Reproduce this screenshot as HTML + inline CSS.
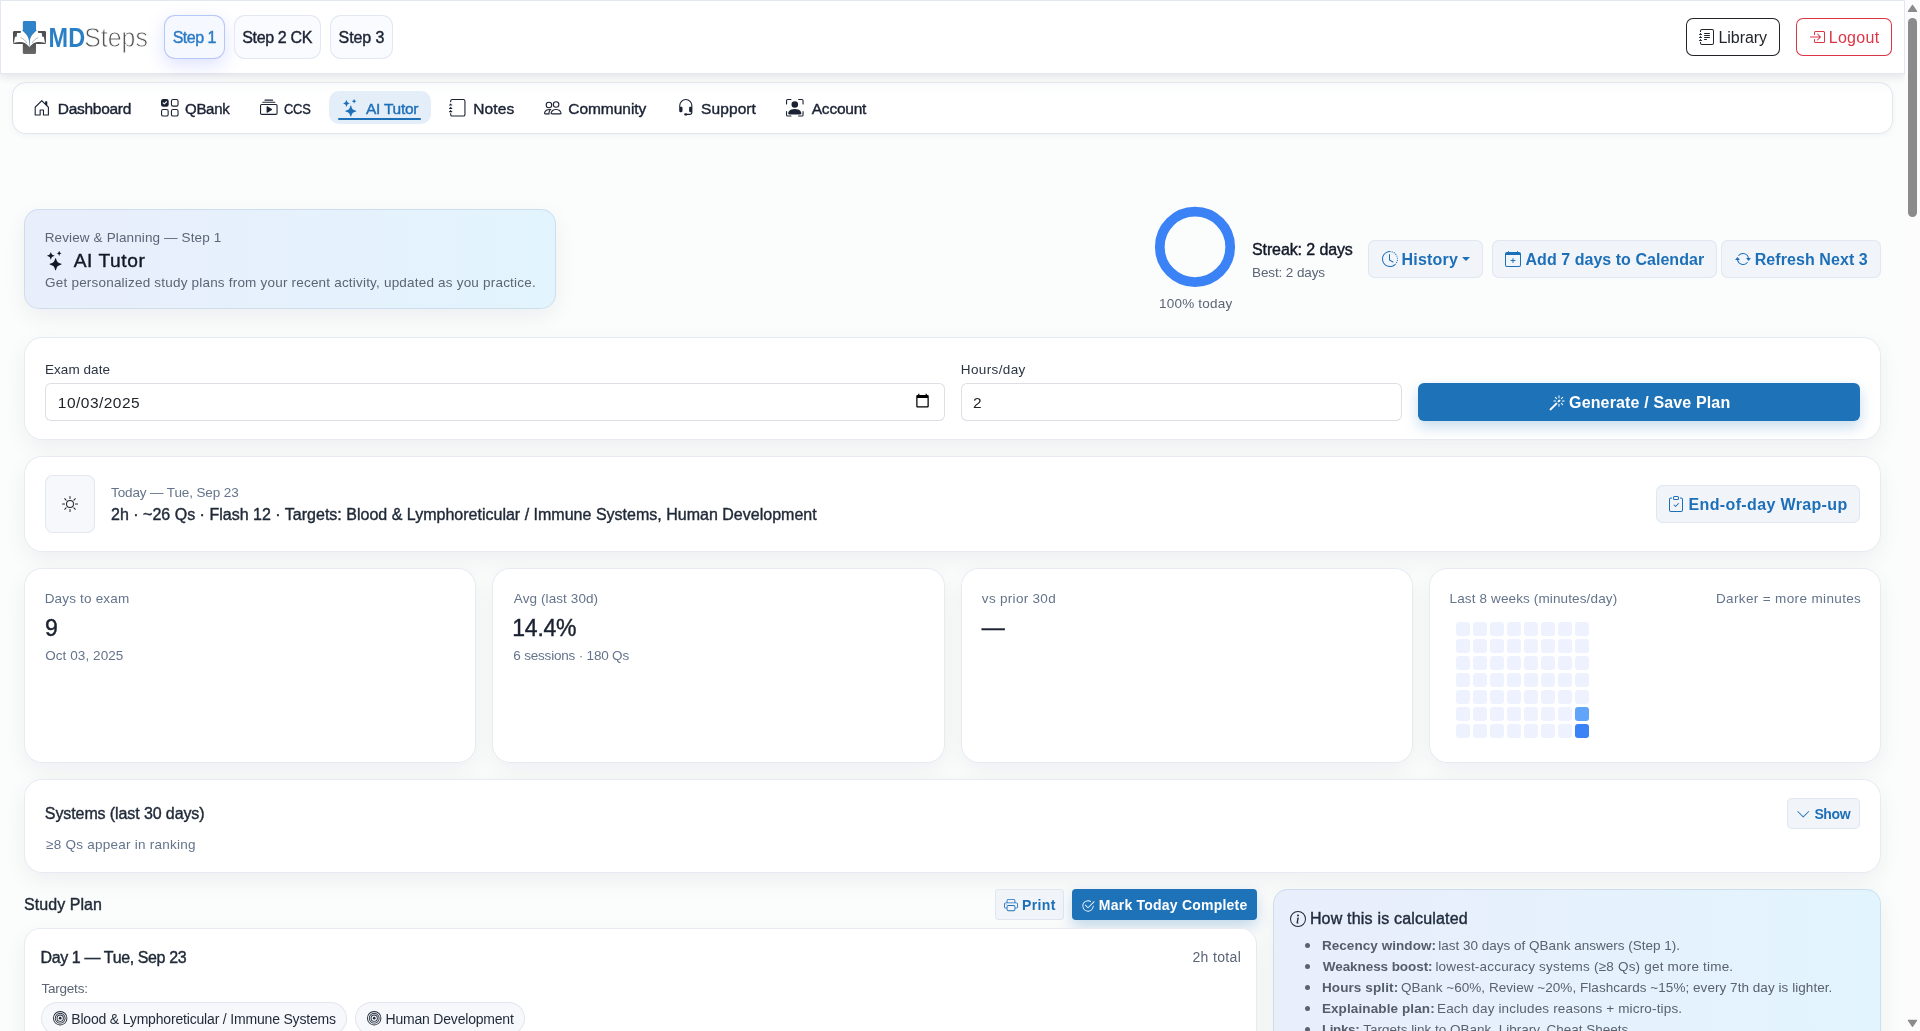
<!DOCTYPE html>
<html lang="en">
<head>
<meta charset="utf-8">
<title>AI Tutor — MDSteps</title>
<style>
*{box-sizing:border-box;margin:0;padding:0}
html,body{width:1920px;height:1031px;overflow:hidden}
body{font-family:"Liberation Sans",sans-serif;font-size:15px;color:#1f2937;background:#fbfcfc;position:relative}
body>*{will-change:transform}
svg{display:block;fill:currentColor;overflow:visible}
.abs,.t,.bx,.card,.btn,.ico{position:absolute}
.t{white-space:nowrap;line-height:1}
.sb{-webkit-text-stroke:.4px currentColor}
.b{font-weight:bold}
.muted{color:#64748b}
#top{position:absolute;left:0;top:0;width:1905px;height:74px;background:#fff;box-shadow:inset 0 0 0 1px #e3e7f1,inset 0 -1px 0 #dde2ec,0 3px 9px rgba(15,23,42,.10)}
.stepbtn{box-shadow:inset 0 0 0 1px #e3e7f3;border-radius:11px;background:#fafbfe;color:#1a2233}
.stepbtn.on{color:#2a7bc6;background:#f5f8ff;box-shadow:inset 0 0 0 1px #b9c6f8,0 6px 18px rgba(99,125,255,.22)}
#subnav{position:absolute;left:12px;top:82px;width:1881px;height:52px;background:linear-gradient(#f9fafb,#fff 12px);border-radius:14px;box-shadow:inset 0 0 0 1px #e1e5ee,0 2px 6px rgba(15,23,42,.04)}
.nv{color:#1a2233;border-radius:10px}
.nv.on{background:#e4eef9;color:#1d6fb8}
.nv.on:after{content:"";position:absolute;left:9px;right:10px;top:26.500px;height:2px;background:#1d6fb8;border-radius:1px}
.card{background:#fff;border-radius:18px;box-shadow:inset 0 0 0 1px #e7eaf2,0 8px 24px rgba(17,24,39,.055)}
.grad{background:linear-gradient(90deg,#e9eefb 0%,#e2f4fd 100%);border-radius:15px;box-shadow:inset 0 0 0 1px rgba(150,180,205,.3),0 8px 24px rgba(17,24,39,.06)}
.lbtn{box-shadow:inset 0 0 0 1px #e0e7f1;border-radius:7px;background:#f1f5fa;color:#1d6fb8}
.pbtn{border-radius:6px;background:#1d72b8;color:#fff;box-shadow:0 6px 14px rgba(29,114,184,.25)}
.inp{box-shadow:inset 0 0 0 1px #dcdfe4;border-radius:6px;background:#fff;color:#212529}
.hm{position:absolute;width:14px;height:14px;border-radius:3px;background:#eef2ff}
.chip{box-shadow:inset 0 0 0 1px #e2e6ee;border-radius:17px;background:#f7f8fb;color:#1f2937}
#how li{list-style:none}
#how li i{position:absolute;width:5px;height:5px;border-radius:50%;background:#5a6270}
</style>
</head>
<body>
<div id="top">
<svg class="abs" style="left:0;top:0" width="160" height="73" viewBox="0 0 160 73">
<defs><linearGradient id="gg" x1="0" y1="0" x2="0" y2="1"><stop offset="0" stop-color="#4e4e4e"/><stop offset="1" stop-color="#6a6a6a"/></linearGradient></defs>
<rect x="13" y="31" width="33" height="13" rx="1.2" fill="#505050"/>
<rect x="22.8" y="42" width="13.2" height="12" rx="1.5" fill="url(#gg)"/>
<path d="M24.2 20.900h10.400a1.400 1.400 0 0 1 1.400 1.400v7.800l.9.500c-3.900 2.300-6.400 5.400-6.900 9.900l-.58 6.900-.58-6.900c-.5-4.500-3-7.600-6.900-9.900l.9-.5v-7.800a1.400 1.400 0 0 1 1.400-1.400z" fill="#2f83c8"/>
<path d="M21.97 30.5C25 32.6 28.3 36 28.9 40.3L29.42 47.6 28.5 46.1C27 44.3 25.5 43 23.4 42.4 20 41.7 16.5 42.1 13.2 43.1L14.05 41.9 15 36.8H16.6L17.1 32.9H20.6L20.8 31.5z" fill="#fff"/>
<path d="M36.87 30.5C33.84 32.6 30.54 36 29.94 40.3L29.42 47.6 30.34 46.1C31.84 44.3 33.34 43 35.44 42.4 38.84 41.7 42.34 42.1 45.64 43.1L44.79 41.9 43.84 36.8H42.24L41.74 32.9H38.24L38.04 31.5z" fill="#fff"/>
<path d="M20.6 37.6c2.700 1.100 4.800 2.900 6.300 5.600M38.240 37.600c-2.700 1.100-4.800 2.900-6.300 5.600" stroke="#777" stroke-width=".55" fill="none"/>
<text x="48.600" y="46.900" font-family="Liberation Sans, sans-serif" font-weight="bold" font-size="27.500" fill="#2b7fc5" textLength="36.500" lengthAdjust="spacingAndGlyphs">MD</text>
<text x="84.300" y="46.900" font-family="Liberation Sans, sans-serif" font-size="27.500" fill="#555" stroke="#fff" stroke-width=".800" textLength="63.500" lengthAdjust="spacingAndGlyphs">Steps</text>
</svg>
<div class="btn stepbtn on" style="left:164px;top:15.2px;width:60.7px;height:43.4px;"><div class="t sb" style="left:8.67px;top:14.8px;font-size:16px;letter-spacing:-0.49px;">Step 1</div></div>
<div class="btn stepbtn" style="left:234px;top:15.2px;width:86.5px;height:43.4px;"><div class="t sb" style="left:8.32px;top:14.8px;font-size:16px;letter-spacing:-0.36px;">Step 2 CK</div></div>
<div class="btn stepbtn" style="left:330px;top:15.2px;width:62.7px;height:43.4px;"><div class="t sb" style="left:8.57px;top:14.8px;font-size:16px;letter-spacing:-0.09px;">Step 3</div></div>
<div class="btn" style="left:1686px;top:18px;width:94px;height:38px;box-shadow:inset 0 0 0 1px #212529;border-radius:7px;color:#212529;background:#fff"><svg class="ico" viewBox="0 0 16 16" width="16" height="16" style="left:12.6px;top:11.2px;"><path d="M5 10.500a.5.5 0 0 1 .5-.5h2a.5.5 0 0 1 0 1h-2a.5.5 0 0 1-.5-.5m0-2a.5.5 0 0 1 .5-.5h5a.5.5 0 0 1 0 1h-5a.5.5 0 0 1-.5-.5m0-2a.5.5 0 0 1 .5-.5h5a.5.5 0 0 1 0 1h-5a.5.5 0 0 1-.5-.5m0-2a.5.5 0 0 1 .5-.5h5a.5.5 0 0 1 0 1h-5a.5.5 0 0 1-.5-.5"/><path d="M3 0h10a2 2 0 0 1 2 2v12a2 2 0 0 1-2 2H3a2 2 0 0 1-2-2v-1h1v1a1 1 0 0 0 1 1h10a1 1 0 0 0 1-1V2a1 1 0 0 0-1-1H3a1 1 0 0 0-1 1v1H1V2a2 2 0 0 1 2-2"/><path d="M1 5v-.5a.5.5 0 0 1 1 0V5h.5a.5.5 0 0 1 0 1h-2a.5.5 0 0 1 0-1zm0 3v-.5a.5.5 0 0 1 1 0V8h.5a.5.5 0 0 1 0 1h-2a.5.5 0 0 1 0-1zm0 3v-.5a.5.5 0 0 1 1 0v.5h.5a.5.5 0 0 1 0 1h-2a.5.5 0 0 1 0-1z"/></svg><div class="t" style="left:32.49px;top:12px;font-size:16px;letter-spacing:-0.06px;">Library</div></div>
<div class="btn" style="left:1796px;top:18px;width:96px;height:38px;box-shadow:inset 0 0 0 1px #dc3545;border-radius:7px;color:#dc3545;background:#fff"><svg class="ico" viewBox="0 0 16 16" width="16" height="16" style="left:12.9px;top:11.2px;"><path fill-rule="evenodd" d="M6 3.500a.5.5 0 0 1 .5-.5h8a.5.5 0 0 1 .5.5v9a.5.5 0 0 1-.5.5h-8a.5.5 0 0 1-.5-.5v-2a.5.5 0 0 0-1 0v2A1.500 1.500 0 0 0 6.500 14h8a1.500 1.500 0 0 0 1.500-1.500v-9A1.500 1.500 0 0 0 14.500 2h-8A1.500 1.500 0 0 0 5 3.500v2a.5.5 0 0 0 1 0z"/><path fill-rule="evenodd" d="M11.854 8.354a.5.5 0 0 0 0-.708l-3-3a.5.5 0 1 0-.708.708L10.293 7.500H1.500a.5.5 0 0 0 0 1h8.793l-2.147 2.146a.5.5 0 0 0 .708.708z"/></svg><div class="t" style="left:32.69px;top:12px;font-size:16px;letter-spacing:0.3px;">Logout</div></div>
</div>
<div id="subnav">
<div class="btn nv" style="left:9px;top:9.2px;width:121px;height:33.3px;"><svg class="ico" viewBox="0 0 16 16" width="17.6" height="17.6" style="left:11.8px;top:7.9px;"><path d="M8.354 1.146a.5.5 0 0 0-.708 0l-6 6A.5.5 0 0 0 1.5 7.5v7a.5.5 0 0 0 .5.5h4.5a.5.5 0 0 0 .5-.5v-4h2v4a.5.5 0 0 0 .5.5H14a.5.5 0 0 0 .5-.5v-7a.5.5 0 0 0-.146-.354L13 5.793V2.5a.5.5 0 0 0-.5-.5h-1a.5.5 0 0 0-.5.5v1.293zM2.5 14V7.707l5.5-5.5 5.5 5.5V14H10v-4a.5.5 0 0 0-.5-.5h-3a.5.5 0 0 0-.5.5v4z"/></svg><div class="t sb" style="left:36.83px;top:9.8px;font-size:15.5px;letter-spacing:-0.29px;">Dashboard</div></div>
<div class="btn nv" style="left:136.5px;top:9.2px;width:93px;height:33.3px;"><svg class="ico" viewBox="0 0 16 16" width="17.6" height="17.6" style="left:12.4px;top:7.9px;"><path d="M2 10h3a1 1 0 0 1 1 1v3a1 1 0 0 1-1 1H2a1 1 0 0 1-1-1v-3a1 1 0 0 1 1-1m9-9h3a1 1 0 0 1 1 1v3a1 1 0 0 1-1 1h-3a1 1 0 0 1-1-1V2a1 1 0 0 1 1-1m0 9a1 1 0 0 0-1 1v3a1 1 0 0 0 1 1h3a1 1 0 0 0 1-1v-3a1 1 0 0 0-1-1zm0-10a2 2 0 0 0-2 2v3a2 2 0 0 0 2 2h3a2 2 0 0 0 2-2V2a2 2 0 0 0-2-2zM2 9a2 2 0 0 0-2 2v3a2 2 0 0 0 2 2h3a2 2 0 0 0 2-2v-3a2 2 0 0 0-2-2zm7 2a2 2 0 0 1 2-2h3a2 2 0 0 1 2 2v3a2 2 0 0 1-2 2h-3a2 2 0 0 1-2-2zM0 2a2 2 0 0 1 2-2h3a2 2 0 0 1 2 2v3a2 2 0 0 1-2 2H2a2 2 0 0 1-2-2zm5.354.854a.5.5 0 1 0-.708-.708L3 3.793l-.646-.647a.5.5 0 1 0-.708.708l1 1a.5.5 0 0 0 .708 0z"/></svg><div class="t sb" style="left:36.59px;top:9.8px;font-size:15.5px;letter-spacing:-0.3px;transform:scaleX(0.968);transform-origin:0 0;">QBank</div></div>
<div class="btn nv" style="left:235.5px;top:9.2px;width:74.5px;height:33.3px;"><svg class="ico" viewBox="0 0 16 16" width="17.6" height="17.6" style="left:12.1px;top:7.9px;"><path d="M2 3a.5.5 0 0 0 .5.5h11a.5.5 0 0 0 0-1h-11A.5.5 0 0 0 2 3m2-2a.5.5 0 0 0 .5.5h7a.5.5 0 0 0 0-1h-7A.5.5 0 0 0 4 1m2.765 5.576A.5.5 0 0 0 6 7v5a.5.5 0 0 0 .765.424l4-2.5a.5.5 0 0 0 0-.848z"/><path d="M1.5 14.5A1.5 1.5 0 0 1 0 13V6a1.5 1.5 0 0 1 1.5-1.5h13A1.5 1.5 0 0 1 16 6v7a1.5 1.5 0 0 1-1.5 1.5zm13-1a.5.5 0 0 0 .5-.5V6a.5.5 0 0 0-.5-.5h-13A.5.5 0 0 0 1 6v7a.5.5 0 0 0 .5.5z"/></svg><div class="t sb" style="left:36.64px;top:9.8px;font-size:15.5px;letter-spacing:-0.3px;transform:scaleX(0.833);transform-origin:0 0;">CCS</div></div>
<div class="btn nv on" style="left:317px;top:9.2px;width:102px;height:33.3px;"><svg class="ico" viewBox="0 0 16 16" width="17.6" height="17.6" style="left:12.7px;top:7.9px;"><path d="M7.657 6.247c.11-.33.576-.33.686 0l.645 1.937a2.89 2.89 0 0 0 1.829 1.828l1.936.645c.33.11.33.576 0 .686l-1.937.645a2.89 2.89 0 0 0-1.828 1.829l-.645 1.936a.361.361 0 0 1-.686 0l-.645-1.937a2.89 2.89 0 0 0-1.828-1.828l-1.937-.645a.361.361 0 0 1 0-.686l1.937-.645a2.89 2.89 0 0 0 1.828-1.828zM3.794 1.148a.217.217 0 0 1 .412 0l.387 1.162c.173.518.579.924 1.097 1.097l1.162.387a.217.217 0 0 1 0 .412l-1.162.387A1.73 1.73 0 0 0 4.593 5.69l-.387 1.162a.217.217 0 0 1-.412 0L3.407 5.69A1.73 1.73 0 0 0 2.31 4.593l-1.162-.387a.217.217 0 0 1 0-.412l1.162-.387A1.73 1.73 0 0 0 3.407 2.31zM10.863.099a.145.145 0 0 1 .274 0l.258.774c.115.346.386.617.732.732l.774.258a.145.145 0 0 1 0 .274l-.774.258a1.16 1.16 0 0 0-.732.732l-.258.774a.145.145 0 0 1-.274 0l-.258-.774a1.16 1.16 0 0 0-.732-.732L9.100 2.137a.145.145 0 0 1 0-.274l.774-.258c.346-.115.617-.386.732-.732z"/></svg><div class="t sb" style="left:37.02px;top:9.8px;font-size:15.5px;letter-spacing:-0.26px;">AI Tutor</div></div>
<div class="btn nv" style="left:425.5px;top:9.2px;width:88px;height:33.3px;"><svg class="ico" viewBox="0 0 16 16" width="17.6" height="17.6" style="left:11.4px;top:7.9px;"><path d="M3 0h10a2 2 0 0 1 2 2v12a2 2 0 0 1-2 2H3a2 2 0 0 1-2-2v-1h1v1a1 1 0 0 0 1 1h10a1 1 0 0 0 1-1V2a1 1 0 0 0-1-1H3a1 1 0 0 0-1 1v1H1V2a2 2 0 0 1 2-2"/><path d="M1 5v-.5a.5.5 0 0 1 1 0V5h.5a.5.5 0 0 1 0 1h-2a.5.5 0 0 1 0-1zm0 3v-.5a.5.5 0 0 1 1 0V8h.5a.5.5 0 0 1 0 1h-2a.5.5 0 0 1 0-1zm0 3v-.5a.5.5 0 0 1 1 0v.5h.5a.5.5 0 0 1 0 1h-2a.5.5 0 0 1 0-1z"/></svg><div class="t sb" style="left:35.73px;top:9.8px;font-size:15.5px;letter-spacing:0.11px;">Notes</div></div>
<div class="btn nv" style="left:520px;top:9.2px;width:126px;height:33.3px;"><svg class="ico" viewBox="0 0 16 16" width="17.6" height="17.6" style="left:11.9px;top:7.9px;"><path d="M15 14s1 0 1-1-1-4-5-4-5 3-5 4 1 1 1 1zm-7.978-1L7 12.996c.001-.264.167-1.030.760-1.720C8.312 10.629 9.282 10 11 10c1.717 0 2.687.630 3.240 1.276.593.690.758 1.457.760 1.720l-.008.002-.014.002zM11 7a2 2 0 1 0 0-4 2 2 0 0 0 0 4m3-2a3 3 0 1 1-6 0 3 3 0 0 1 6 0M6.936 9.280a6 6 0 0 0-1.230-.247A7 7 0 0 0 5 9c-4 0-5 3-5 4q0 1 1 1h4.216A2.240 2.240 0 0 1 5 13c0-1.010.377-2.042 1.090-2.904.243-.294.526-.569.846-.816M4.920 10A5.500 5.500 0 0 0 4 13H1c0-.260.164-1.030.760-1.724.545-.636 1.492-1.256 3.160-1.275ZM1.500 5.500a3 3 0 1 1 6 0 3 3 0 0 1-6 0m3-2a2 2 0 1 0 0 4 2 2 0 0 0 0-4"/></svg><div class="t sb" style="left:36.26px;top:9.8px;font-size:15.5px;letter-spacing:-0.04px;">Community</div></div>
<div class="btn nv" style="left:653px;top:9.2px;width:102.5px;height:33.3px;"><svg class="ico" viewBox="0 0 16 16" width="17.6" height="17.6" style="left:11.6px;top:7.9px;"><path d="M8 1a5 5 0 0 0-5 5v1h1a1 1 0 0 1 1 1v3a1 1 0 0 1-1 1H3a1 1 0 0 1-1-1V6a6 6 0 1 1 12 0v6a2.500 2.500 0 0 1-2.500 2.500H9.366a1 1 0 0 1-.866.500h-1a1 1 0 1 1 0-2h1a1 1 0 0 1 .866.500H11.500A1.500 1.500 0 0 0 13 12h-1a1 1 0 0 1-1-1V8a1 1 0 0 1 1-1h1V6a5 5 0 0 0-5-5"/></svg><div class="t sb" style="left:36.1px;top:9.8px;font-size:15.5px;letter-spacing:0.09px;">Support</div></div>
<div class="btn nv" style="left:761.5px;top:9.2px;width:104.5px;height:33.3px;"><svg class="ico" viewBox="0 0 16 16" width="17.6" height="17.6" style="left:12.2px;top:7.9px;"><path d="M1.500 1a.5.5 0 0 0-.5.5v3a.5.5 0 0 1-1 0v-3A1.500 1.500 0 0 1 1.500 0h3a.5.5 0 0 1 0 1zM11 .5a.5.5 0 0 1 .5-.5h3A1.500 1.500 0 0 1 16 1.500v3a.5.5 0 0 1-1 0v-3a.5.5 0 0 0-.5-.5h-3a.5.5 0 0 1-.5-.5M.5 11a.5.5 0 0 1 .5.5v3a.5.5 0 0 0 .5.5h3a.5.5 0 0 1 0 1h-3A1.500 1.500 0 0 1 0 14.500v-3a.5.5 0 0 1 .5-.5m15 0a.5.5 0 0 1 .5.5v3a1.500 1.500 0 0 1-1.500 1.500h-3a.5.5 0 0 1 0-1h3a.5.5 0 0 0 .5-.5v-3a.5.5 0 0 1 .5-.5"/><path d="M3 14s-1 0-1-1 1-4 6-4 6 3 6 4-1 1-1 1zm8-9a3 3 0 1 1-6 0 3 3 0 0 1 6 0"/></svg><div class="t sb" style="left:38.27px;top:9.8px;font-size:15.5px;letter-spacing:-0.23px;">Account</div></div>
</div>
<div class="card grad" style="left:24px;top:209px;width:532px;height:100px;"><div class="t" style="left:20.69px;top:22px;font-size:13.5px;letter-spacing:0.13px;color:#5b6576">Review &amp; Planning — Step 1</div><svg class="ico" viewBox="0 0 16 16" width="19.2" height="19.2" style="left:21.5px;top:42.1px;color:#111827"><path d="M7.657 6.247c.11-.33.576-.33.686 0l.645 1.937a2.89 2.89 0 0 0 1.829 1.828l1.936.645c.33.11.33.576 0 .686l-1.937.645a2.89 2.89 0 0 0-1.828 1.829l-.645 1.936a.361.361 0 0 1-.686 0l-.645-1.937a2.89 2.89 0 0 0-1.828-1.828l-1.937-.645a.361.361 0 0 1 0-.686l1.937-.645a2.89 2.89 0 0 0 1.828-1.828zM3.794 1.148a.217.217 0 0 1 .412 0l.387 1.162c.173.518.579.924 1.097 1.097l1.162.387a.217.217 0 0 1 0 .412l-1.162.387A1.73 1.73 0 0 0 4.593 5.69l-.387 1.162a.217.217 0 0 1-.412 0L3.407 5.69A1.73 1.73 0 0 0 2.31 4.593l-1.162-.387a.217.217 0 0 1 0-.412l1.162-.387A1.73 1.73 0 0 0 3.407 2.31zM10.863.099a.145.145 0 0 1 .274 0l.258.774c.115.346.386.617.732.732l.774.258a.145.145 0 0 1 0 .274l-.774.258a1.16 1.16 0 0 0-.732.732l-.258.774a.145.145 0 0 1-.274 0l-.258-.774a1.16 1.16 0 0 0-.732-.732L9.100 2.137a.145.145 0 0 1 0-.274l.774-.258c.346-.115.617-.386.732-.732z"/></svg><div class="t sb" style="left:49.66px;top:42px;font-size:19.2px;letter-spacing:0.57px;color:#111827">AI Tutor</div><div class="t" style="left:21.12px;top:67px;font-size:13.5px;letter-spacing:0.2px;color:#5b6576">Get personalized study plans from your recent activity, updated as you practice.</div></div>
<svg class="abs" style="left:1151px;top:203px" width="88" height="88" viewBox="0 0 88 88"><circle cx="44" cy="43.900" r="35.200" fill="none" stroke="#3b82f6" stroke-width="9.700"/></svg>
<div class="t" style="left:1158.87px;top:297px;font-size:13.5px;letter-spacing:0.21px;color:#5b6576">100% today</div><div class="t sb" style="left:1252.07px;top:242px;font-size:16px;letter-spacing:-0.11px;color:#111827">Streak: 2 days</div><div class="t" style="left:1251.69px;top:266px;font-size:13.5px;letter-spacing:-0.11px;color:#5b6576">Best: 2 days</div><div class="btn lbtn" style="left:1368px;top:240px;width:115px;height:38px;"><svg class="ico" viewBox="0 0 16 16" width="16" height="16" style="left:13.8px;top:11.3px;"><path d="M8.515 1.019A7 7 0 0 0 8 1V0a8 8 0 0 1 .589.022zm2.004.450a7 7 0 0 0-.985-.299l.219-.976q.576.129 1.126.342zm1.370.710a7 7 0 0 0-.439-.270l.493-.870a8 8 0 0 1 .979.654l-.615.789a7 7 0 0 0-.418-.302zm1.834 1.790a7 7 0 0 0-.653-.796l.724-.690q.406.429.747.910zm.744 1.352a7 7 0 0 0-.214-.468l.893-.450a8 8 0 0 1 .450 1.088l-.950.313a7 7 0 0 0-.179-.483m.530 2.507a7 7 0 0 0-.100-1.025l.985-.170q.100.580.116 1.170zm-.131 1.538q.050-.254.081-.510l.993.123a8 8 0 0 1-.230 1.155l-.964-.267q.069-.247.120-.501m-.952 2.379q.276-.436.486-.908l.914.405q-.240.540-.555 1.038zm-.964 1.205q.183-.183.350-.378l.758.653a8 8 0 0 1-.401.432z"/><path d="M8 1a7 7 0 1 0 4.950 11.950l.707.707A8.001 8.001 0 1 1 8 0z"/><path d="M7.500 3a.5.5 0 0 1 .5.5v5.210l3.248 1.856a.5.5 0 0 1-.496.868l-3.500-2A.5.5 0 0 1 7 9V3.500a.5.5 0 0 1 .5-.5"/></svg><div class="t b" style="left:33.43px;top:12px;font-size:16px;letter-spacing:0.24px;">History</div><i class="abs" style="left:94.3px;top:17.4px;border:4.100px solid transparent;border-top:4.500px solid #1d6fb8;border-bottom:0"></i></div>
<div class="btn lbtn" style="left:1492px;top:240px;width:225px;height:38px;"><svg class="ico" viewBox="0 0 16 16" width="16" height="16" style="left:13.1px;top:11.3px;"><path d="M8 7a.5.5 0 0 1 .5.5V9H10a.5.5 0 0 1 0 1H8.500v1.500a.5.5 0 0 1-1 0V10H6a.5.5 0 0 1 0-1h1.500V7.500A.5.5 0 0 1 8 7"/><path d="M3.500 0a.5.5 0 0 1 .5.5V1h8V.5a.5.5 0 0 1 1 0V1h1a2 2 0 0 1 2 2v11a2 2 0 0 1-2 2H2a2 2 0 0 1-2-2V3a2 2 0 0 1 2-2h1V.5a.5.5 0 0 1 .5-.5M1 4v10a1 1 0 0 0 1 1h12a1 1 0 0 0 1-1V4z"/></svg><div class="t b" style="left:33.5px;top:12px;font-size:16px;letter-spacing:0.04px;">Add 7 days to Calendar</div></div>
<div class="btn lbtn" style="left:1721px;top:240px;width:160px;height:38px;"><svg class="ico" viewBox="0 0 16 16" width="16" height="16" style="left:13.9px;top:11.3px;"><path d="M11.534 7h3.932a.25.25 0 0 1 .192.410l-1.966 2.360a.25.25 0 0 1-.384 0l-1.966-2.360a.25.25 0 0 1 .192-.410m-11 2h3.932a.25.25 0 0 0 .192-.410L2.692 6.230a.25.25 0 0 0-.384 0L.342 8.590A.25.25 0 0 0 .534 9"/><path fill-rule="evenodd" d="M8 3c-1.552 0-2.940.707-3.857 1.818a.5.5 0 1 1-.771-.636A6.002 6.002 0 0 1 13.917 7H12.900A5 5 0 0 0 8 3M3.100 9a5.002 5.002 0 0 0 8.757 2.182.5.5 0 1 1 .771.636A6.002 6.002 0 0 1 2.083 9z"/></svg><div class="t b" style="left:33.63px;top:12px;font-size:16px;letter-spacing:0.08px;">Refresh Next 3</div></div>
<div class="card" style="left:24px;top:337px;width:1857px;height:103px;"><div class="t" style="left:20.94px;top:26px;font-size:13.5px;letter-spacing:0.07px;color:#2b3443">Exam date</div><div class="btn inp" style="left:21px;top:46px;width:900px;height:38px;"><div class="t" style="left:12.87px;top:12px;font-size:15.5px;letter-spacing:0.47px;">10/03/2025</div><svg class="abs" style="left:870px;top:10.300px;color:#000" width="15" height="15" viewBox="0 0 24 24"><path d="M20 3h-1V1h-2v2H7V1H5v2H4c-1.100 0-2 .900-2 2v16c0 1.100.900 2 2 2h16c1.100 0 2-.900 2-2V5c0-1.100-.900-2-2-2zm0 18H4V8h16v13z"/></svg></div>
<div class="t" style="left:936.79px;top:26px;font-size:13.5px;letter-spacing:0.38px;color:#2b3443">Hours/day</div><div class="btn inp" style="left:937px;top:46px;width:441px;height:38px;"><div class="t" style="left:12.12px;top:12px;font-size:15.5px;letter-spacing:0.84px;">2</div></div>
<div class="btn pbtn" style="left:1394px;top:46px;width:442px;height:38px;"><svg class="ico" viewBox="0 0 16 16" width="16" height="16" style="left:130.8px;top:11.5px;"><path d="M9.500 2.672a.5.5 0 1 0 1 0V.843a.5.5 0 0 0-1 0zm4.500.035A.5.5 0 0 0 13.293 2L12 3.293a.5.5 0 1 0 .707.707zM7.293 4A.5.5 0 1 0 8 3.293L6.707 2A.5.5 0 0 0 6 2.707zm-.621 2.500a.5.5 0 1 0 0-1H4.843a.5.5 0 1 0 0 1zm8.485 0a.5.5 0 1 0 0-1h-1.829a.5.5 0 0 0 0 1zM13.293 10A.5.5 0 1 0 14 9.293L12.707 8a.5.5 0 1 0-.707.707zM9.500 11.157a.5.5 0 0 0 1 0V9.328a.5.5 0 0 0-1 0zm1.854-5.097a.5.5 0 0 0 0-.706l-.708-.708a.5.5 0 0 0-.707 0L8.646 5.940a.5.5 0 0 0 0 .707l.708.708a.5.5 0 0 0 .707 0l1.293-1.293Zm-3 3a.5.5 0 0 0 0-.706l-.708-.708a.5.5 0 0 0-.707 0L.646 13.940a.5.5 0 0 0 0 .707l.708.708a.5.5 0 0 0 .707 0z"/></svg><div class="t b" style="left:151.04px;top:12px;font-size:16px;letter-spacing:0.15px;">Generate / Save Plan</div></div>
</div>
<div class="card" style="left:24px;top:456px;width:1857px;height:96px;"><div class="btn" style="left:21px;top:19px;width:50px;height:58px;box-shadow:inset 0 0 0 1px #e3e8f0;border-radius:8px;background:#f6f8fb;color:#222"><svg class="ico" viewBox="0 0 16 16" width="16" height="16" style="left:17.3px;top:21.3px;"><path d="M8 11a3 3 0 1 1 0-6 3 3 0 0 1 0 6m0 1a4 4 0 1 0 0-8 4 4 0 0 0 0 8M8 0a.5.5 0 0 1 .5.5v2a.5.5 0 0 1-1 0v-2A.5.5 0 0 1 8 0m0 13a.5.5 0 0 1 .5.5v2a.5.5 0 0 1-1 0v-2A.5.5 0 0 1 8 13m8-5a.5.5 0 0 1-.5.5h-2a.5.5 0 0 1 0-1h2a.5.5 0 0 1 .5.5M3 8a.5.5 0 0 1-.5.5h-2a.5.5 0 0 1 0-1h2A.5.5 0 0 1 3 8m10.657-5.657a.5.5 0 0 1 0 .707l-1.414 1.415a.5.5 0 1 1-.707-.708l1.414-1.414a.5.5 0 0 1 .707 0m-9.193 9.193a.5.5 0 0 1 0 .707L3.050 13.657a.5.5 0 0 1-.707-.707l1.414-1.414a.5.5 0 0 1 .707 0m9.193 2.121a.5.5 0 0 1-.707 0l-1.414-1.414a.5.5 0 0 1 .707-.707l1.414 1.414a.5.5 0 0 1 0 .707M4.464 4.465a.5.5 0 0 1-.707 0L2.343 3.050a.5.5 0 1 1 .707-.707l1.414 1.414a.5.5 0 0 1 0 .708"/></svg></div>
<div class="t" style="left:87px;top:30px;font-size:13.5px;letter-spacing:-0.12px;color:#64748b">Today — Tue, Sep 23</div><div class="t sb" style="left:87px;top:51px;font-size:16px;letter-spacing:0.01px;color:#1f2937">2h · ~26 Qs · Flash 12 · Targets: Blood &amp; Lymphoreticular / Immune Systems, Human Development</div><div class="btn lbtn" style="left:1632px;top:29px;width:204px;height:38px;"><svg class="ico" viewBox="0 0 16 16" width="16" height="16" style="left:11.9px;top:11.3px;"><path fill-rule="evenodd" d="M10.854 7.146a.5.5 0 0 1 0 .708l-3 3a.5.5 0 0 1-.708 0l-1.500-1.500a.5.5 0 1 1 .708-.708L7.500 9.793l2.646-2.647a.5.5 0 0 1 .708 0"/><path d="M4 1.500H3a2 2 0 0 0-2 2V14a2 2 0 0 0 2 2h10a2 2 0 0 0 2-2V3.500a2 2 0 0 0-2-2h-1v1h1a1 1 0 0 1 1 1V14a1 1 0 0 1-1 1H3a1 1 0 0 1-1-1V3.500a1 1 0 0 1 1-1h1z"/><path d="M9.500 1a.5.5 0 0 1 .5.5v1a.5.5 0 0 1-.5.5h-3a.5.5 0 0 1-.5-.5v-1a.5.5 0 0 1 .5-.5zm-3-1A1.500 1.500 0 0 0 5 1.500v1A1.500 1.500 0 0 0 6.500 4h3A1.500 1.500 0 0 0 11 2.500v-1A1.500 1.500 0 0 0 9.500 0z"/></svg><div class="t b" style="left:32.53px;top:12px;font-size:16px;letter-spacing:0.36px;">End-of-day Wrap-up</div></div>
</div>
<div class="card" style="left:24px;top:568px;width:452px;height:195px;"><div class="t muted" style="left:20.69px;top:24px;font-size:13.5px;letter-spacing:0.18px;">Days to exam</div><div class="t sb" style="left:21.02px;top:49px;font-size:23px;letter-spacing:1.58px;color:#1a2130">9</div><div class="t muted" style="left:21.16px;top:81px;font-size:13.5px;letter-spacing:0.08px;">Oct 03, 2025</div></div>
<div class="card" style="left:492px;top:568px;width:453px;height:195px;"><div class="t muted" style="left:21.77px;top:24px;font-size:13.5px;letter-spacing:0.1px;">Avg (last 30d)</div><div class="t sb" style="left:20.3px;top:49px;font-size:23px;letter-spacing:-0.25px;color:#1a2130">14.4%</div><div class="t muted" style="left:21.31px;top:81px;font-size:13.5px;letter-spacing:-0.19px;">6 sessions · 180 Qs</div></div>
<div class="card" style="left:961px;top:568px;width:452px;height:195px;"><div class="t muted" style="left:20.85px;top:24px;font-size:13.5px;letter-spacing:0.3px;">vs prior 30d</div><div class="t sb" style="left:20.8px;top:48px;font-size:23px;letter-spacing:1px;color:#1a2130">—</div></div>
<div class="card" style="left:1429px;top:568px;width:452px;height:195px;"><div class="t muted" style="left:20.59px;top:24px;font-size:13.5px;letter-spacing:0.13px;">Last 8 weeks (minutes/day)</div><div class="t muted" style="left:286.99px;top:24px;font-size:13.5px;letter-spacing:0.36px;">Darker = more minutes</div><i class="hm" style="left:27px;top:54px;"></i><i class="hm" style="left:44px;top:54px;"></i><i class="hm" style="left:61px;top:54px;"></i><i class="hm" style="left:78px;top:54px;"></i><i class="hm" style="left:95px;top:54px;"></i><i class="hm" style="left:112px;top:54px;"></i><i class="hm" style="left:129px;top:54px;"></i><i class="hm" style="left:146px;top:54px;"></i><i class="hm" style="left:27px;top:71px;"></i><i class="hm" style="left:44px;top:71px;"></i><i class="hm" style="left:61px;top:71px;"></i><i class="hm" style="left:78px;top:71px;"></i><i class="hm" style="left:95px;top:71px;"></i><i class="hm" style="left:112px;top:71px;"></i><i class="hm" style="left:129px;top:71px;"></i><i class="hm" style="left:146px;top:71px;"></i><i class="hm" style="left:27px;top:88px;"></i><i class="hm" style="left:44px;top:88px;"></i><i class="hm" style="left:61px;top:88px;"></i><i class="hm" style="left:78px;top:88px;"></i><i class="hm" style="left:95px;top:88px;"></i><i class="hm" style="left:112px;top:88px;"></i><i class="hm" style="left:129px;top:88px;"></i><i class="hm" style="left:146px;top:88px;"></i><i class="hm" style="left:27px;top:105px;"></i><i class="hm" style="left:44px;top:105px;"></i><i class="hm" style="left:61px;top:105px;"></i><i class="hm" style="left:78px;top:105px;"></i><i class="hm" style="left:95px;top:105px;"></i><i class="hm" style="left:112px;top:105px;"></i><i class="hm" style="left:129px;top:105px;"></i><i class="hm" style="left:146px;top:105px;"></i><i class="hm" style="left:27px;top:122px;"></i><i class="hm" style="left:44px;top:122px;"></i><i class="hm" style="left:61px;top:122px;"></i><i class="hm" style="left:78px;top:122px;"></i><i class="hm" style="left:95px;top:122px;"></i><i class="hm" style="left:112px;top:122px;"></i><i class="hm" style="left:129px;top:122px;"></i><i class="hm" style="left:146px;top:122px;"></i><i class="hm" style="left:27px;top:139px;"></i><i class="hm" style="left:44px;top:139px;"></i><i class="hm" style="left:61px;top:139px;"></i><i class="hm" style="left:78px;top:139px;"></i><i class="hm" style="left:95px;top:139px;"></i><i class="hm" style="left:112px;top:139px;"></i><i class="hm" style="left:129px;top:139px;"></i><i class="hm" style="left:146px;top:139px;background:#60a5fa;"></i><i class="hm" style="left:27px;top:156px;"></i><i class="hm" style="left:44px;top:156px;"></i><i class="hm" style="left:61px;top:156px;"></i><i class="hm" style="left:78px;top:156px;"></i><i class="hm" style="left:95px;top:156px;"></i><i class="hm" style="left:112px;top:156px;"></i><i class="hm" style="left:129px;top:156px;"></i><i class="hm" style="left:146px;top:156px;background:#3b82f6;"></i></div>
<div class="card" style="left:24px;top:779px;width:1857px;height:94px;"><div class="t sb" style="left:20.87px;top:27px;font-size:16px;letter-spacing:-0.1px;color:#1f2937">Systems (last 30 days)</div><div class="t muted" style="left:22.07px;top:59px;font-size:13.5px;letter-spacing:0.25px;">≥8 Qs appear in ranking</div><div class="btn lbtn" style="left:1763px;top:19px;width:73px;height:31px;border-radius:5px"><svg class="ico" viewBox="0 0 16 16" width="14.5" height="14.5" style="left:9.1px;top:8.7px;"><path fill-rule="evenodd" d="M1.646 4.646a.5.5 0 0 1 .708 0L8 10.293l5.646-5.647a.5.5 0 0 1 .708.708l-6 6a.5.5 0 0 1-.708 0l-6-6a.5.5 0 0 1 0-.708"/></svg><div class="t b" style="left:27.4px;top:9px;font-size:14px;letter-spacing:-0.39px;">Show</div></div>
</div>
<div class="t sb" style="left:23.97px;top:897px;font-size:16px;letter-spacing:0.06px;color:#1f2937">Study Plan</div><div class="btn lbtn" style="left:995px;top:889px;width:69px;height:31px;border-radius:4px"><svg class="ico" viewBox="0 0 16 16" width="14" height="14" style="left:9px;top:9.3px;"><path d="M2.500 8a.5.5 0 1 0 0-1 .5.5 0 0 0 0 1"/><path d="M5 1a2 2 0 0 0-2 2v2H2a2 2 0 0 0-2 2v3a2 2 0 0 0 2 2h1v1a2 2 0 0 0 2 2h6a2 2 0 0 0 2-2v-1h1a2 2 0 0 0 2-2V7a2 2 0 0 0-2-2h-1V3a2 2 0 0 0-2-2zM4 3a1 1 0 0 1 1-1h6a1 1 0 0 1 1 1v2H4zm1 5a2 2 0 0 0-2 2v1H2a1 1 0 0 1-1-1V7a1 1 0 0 1 1-1h12a1 1 0 0 1 1 1v3a1 1 0 0 1-1 1h-1v-1a2 2 0 0 0-2-2zm7 2v3a1 1 0 0 1-1 1H5a1 1 0 0 1-1-1v-3a1 1 0 0 1 1-1h6a1 1 0 0 1 1 1"/></svg><div class="t b" style="left:26.96px;top:9px;font-size:14px;letter-spacing:0.4px;">Print</div></div>
<div class="btn pbtn" style="left:1072px;top:889px;width:185px;height:31px;border-radius:4px"><svg class="ico" viewBox="0 0 16 16" width="14" height="14" style="left:9px;top:9.7px;"><path d="M2.500 8a5.500 5.500 0 0 1 8.250-4.764.5.5 0 0 0 .5-.866A6.500 6.500 0 1 0 14.500 8a.5.5 0 0 0-1 0 5.500 5.500 0 1 1-11 0"/><path d="M15.354 3.354a.5.5 0 0 0-.708-.708L8 9.293 5.354 6.646a.5.5 0 1 0-.708.708l3 3a.5.5 0 0 0 .708 0z"/></svg><div class="t b" style="left:26.86px;top:9px;font-size:14px;letter-spacing:0.22px;">Mark Today Complete</div></div>
<div class="card" style="left:24px;top:928px;width:1233px;height:172px;border-radius:16px"><div class="t sb" style="left:16.49px;top:22px;font-size:16px;letter-spacing:-0.38px;color:#1f2937">Day 1 — Tue, Sep 23</div><div class="t" style="left:1168.4px;top:22px;font-size:14px;letter-spacing:0.35px;color:#5b6576">2h total</div><div class="t" style="left:17.5px;top:54px;font-size:13.5px;letter-spacing:-0.23px;color:#5b6576">Targets:</div><div class="btn chip" style="left:17px;top:74.2px;width:305.6px;height:32.6px;"><svg class="ico" viewBox="0 0 16 16" width="14.4" height="14.4" style="left:11.7px;top:9.1px;"><path d="M8 15A7 7 0 1 1 8 1a7 7 0 0 1 0 14m0 1A8 8 0 1 0 8 0a8 8 0 0 0 0 16"/><path d="M8 13A5 5 0 1 1 8 3a5 5 0 0 1 0 10m0 1A6 6 0 1 0 8 2a6 6 0 0 0 0 12"/><path d="M8 11a3 3 0 1 1 0-6 3 3 0 0 1 0 6m0 1a4 4 0 1 0 0-8 4 4 0 0 0 0 8"/><path d="M9.500 8a1.500 1.500 0 1 1-3 0 1.500 1.500 0 0 1 3 0"/></svg><div class="t" style="left:30.25px;top:9.8px;font-size:14px;letter-spacing:-0.18px;">Blood &amp; Lymphoreticular / Immune Systems</div></div>
<div class="btn chip" style="left:331.4px;top:74.2px;width:169.2px;height:32.6px;"><svg class="ico" viewBox="0 0 16 16" width="14.4" height="14.4" style="left:11.5px;top:9.1px;"><path d="M8 15A7 7 0 1 1 8 1a7 7 0 0 1 0 14m0 1A8 8 0 1 0 8 0a8 8 0 0 0 0 16"/><path d="M8 13A5 5 0 1 1 8 3a5 5 0 0 1 0 10m0 1A6 6 0 1 0 8 2a6 6 0 0 0 0 12"/><path d="M8 11a3 3 0 1 1 0-6 3 3 0 0 1 0 6m0 1a4 4 0 1 0 0-8 4 4 0 0 0 0 8"/><path d="M9.500 8a1.500 1.500 0 1 1-3 0 1.500 1.500 0 0 1 3 0"/></svg><div class="t" style="left:30.15px;top:9.8px;font-size:14px;letter-spacing:-0.2px;">Human Development</div></div>
</div>
<div id="how" class="card grad" style="left:1273px;top:889px;width:608px;height:211px;"><svg class="ico" viewBox="0 0 16 16" width="16" height="16" style="left:16.8px;top:21.7px;color:#1f2937"><path d="M8 15A7 7 0 1 1 8 1a7 7 0 0 1 0 14m0 1A8 8 0 1 0 8 0a8 8 0 0 0 0 16"/><path d="m8.930 6.588-2.290.287-.082.380.450.083c.294.070.352.176.288.469l-.738 3.468c-.194.897.105 1.319.808 1.319.545 0 1.178-.252 1.465-.598l.088-.416c-.200.176-.492.246-.686.246-.275 0-.375-.193-.304-.533zM9 4.500a1 1 0 1 1-2 0 1 1 0 0 1 2 0"/></svg><div class="t sb" style="left:36.89px;top:22px;font-size:16px;letter-spacing:0.19px;color:#1e293b">How this is calculated</div><ul>
<li><i style="left:32.3px;top:53.5px"></i><div class="t b" style="left:48.9px;top:50px;font-size:13.5px;letter-spacing:0.06px;color:#555d6b">Recency window:</div><div class="t" style="left:165.14px;top:50px;font-size:13.5px;letter-spacing:0.01px;color:#5a6270">last 30 days of QBank answers (Step 1).</div></li>
<li><i style="left:32.3px;top:74.5px"></i><div class="t b" style="left:49.79px;top:71px;font-size:13.5px;letter-spacing:-0.07px;color:#555d6b">Weakness boost:</div><div class="t" style="left:162.39px;top:71px;font-size:13.5px;letter-spacing:0.2px;color:#5a6270">lowest-accuracy systems (≥8 Qs) get more time.</div></li>
<li><i style="left:32.3px;top:95.5px"></i><div class="t b" style="left:48.9px;top:92px;font-size:13.5px;letter-spacing:0.12px;color:#555d6b">Hours split:</div><div class="t" style="left:127.91px;top:92px;font-size:13.5px;letter-spacing:0.05px;color:#5a6270">QBank ~60%, Review ~20%, Flashcards ~15%; every 7th day is lighter.</div></li>
<li><i style="left:32.3px;top:116.5px"></i><div class="t b" style="left:48.9px;top:113px;font-size:13.5px;letter-spacing:0.11px;color:#555d6b">Explainable plan:</div><div class="t" style="left:163.99px;top:113px;font-size:13.5px;letter-spacing:0.16px;color:#5a6270">Each day includes reasons + micro-tips.</div></li>
<li><i style="left:32.3px;top:137.5px"></i><div class="t b" style="left:48.9px;top:134px;font-size:13.5px;letter-spacing:-0.39px;color:#555d6b">Links:</div><div class="t" style="left:90.2px;top:134px;font-size:13.5px;letter-spacing:-0.01px;color:#5a6270">Targets link to QBank, Library, Cheat Sheets.</div></li>
</ul>
</div>
<div class="abs" style="left:1905px;top:0;width:15px;height:1031px;background:#fcfcfc"><svg class="abs" width="15" height="1031" viewBox="0 0 15 1031" style="left:0;top:0;fill:#8b8b8b"><path d="M7.500 5.300 11.600 11.400H3.400z" stroke="#8b8b8b" stroke-width="1.200" stroke-linejoin="round"/><rect x="3" y="18" width="9" height="199" rx="4.500"/><path d="M7.500 1026.300 11.600 1020.400H3.400z" stroke="#8b8b8b" stroke-width="1.200" stroke-linejoin="round"/></svg></div>
</body>
</html>
